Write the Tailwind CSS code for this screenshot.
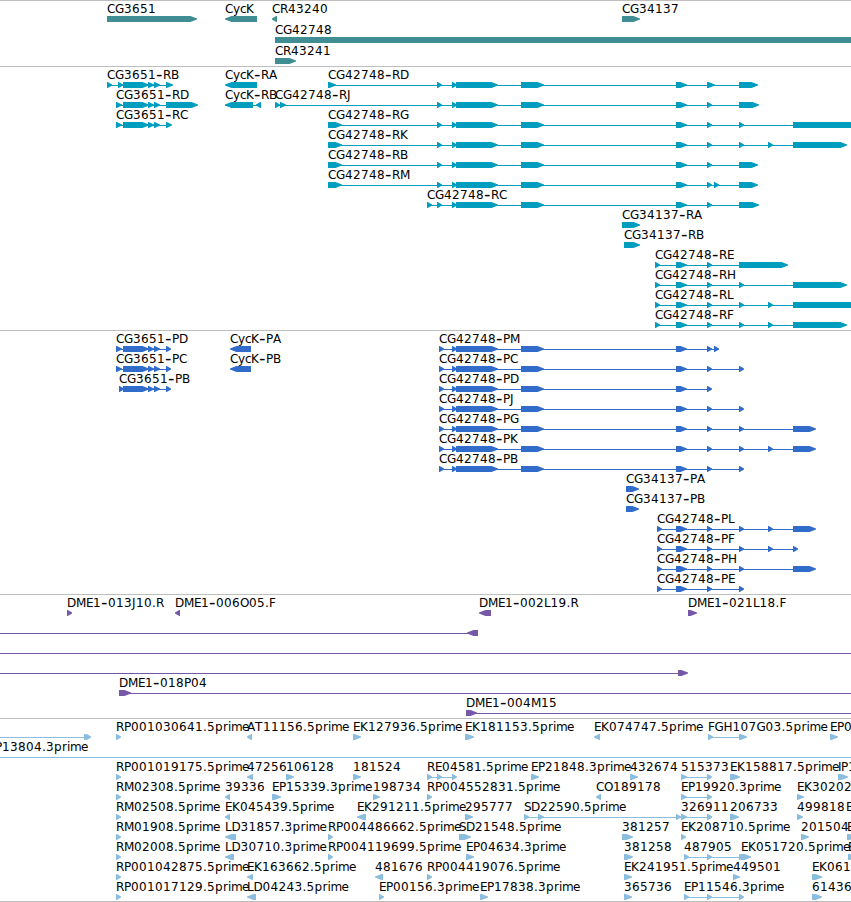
<!DOCTYPE html>
<html lang="en">
<head>
<meta charset="utf-8">
<title>Genome tracks</title>
<script src="https://cdn.jsdelivr.net/npm/@tailwindcss/browser@4"></script>
</head>
<body class="bg-white overflow-hidden">
<main class="flex flex-col w-[851px] h-[902px] overflow-hidden border-b border-[#bebebe] font-['DejaVu_Sans',sans-serif] text-[12px]">
  <section class="h-[66px] shrink-0 border-t border-[#bebebe]"><svg id="genes" class="block w-full h-[65px] overflow-visible text-[#408e93]"></svg></section>
  <section class="h-[264px] shrink-0 border-t border-[#bebebe]"><svg id="transcripts" class="block w-full h-[263px] overflow-visible text-[#009dbf]"></svg></section>
  <section class="h-[264px] shrink-0 border-t border-[#bebebe]"><svg id="proteins" class="block w-full h-[263px] overflow-visible text-[#326ccb]"></svg></section>
  <section class="h-[124px] shrink-0 border-t border-[#bebebe]"><svg id="bacs" class="block w-full h-[123px] overflow-visible text-[#7558a8]"></svg></section>
  <section class="h-[183px] shrink-0 border-t border-[#bebebe]"><svg id="ests" class="block w-full h-[182px] overflow-visible text-[#8abdde]"></svg></section>
</main>
<script>
// Horizontal advance of each label character, in pixels
const ADV = {C:8,G:9,R:8,D:9,K:8,B:7,J:4,M:10,E:7,H:9,L:6.5,F:6.5,P:7,A:8,O:9,S:7,T:8,I:3,'-':7,'.':4,y:7,c:6,p:8,r:5,i:3,m:11,e:7};
const NS = 'http://www.w3.org/2000/svg';
function el(parent, name, attrs) {
  const n = document.createElementNS(NS, name);
  for (const k in attrs) n.setAttribute(k, attrs[k]);
  parent.appendChild(n);
  return n;
}
// Feature: [row, label, exons "a-b a-b", direction, connector start, connector end]
function track(id, pitch, items) {
  const svg = document.getElementById(id);
  for (const [row, label, spans, dir = 1, from, to] of items) {
    const y = 15 + row * pitch;
    const ex = spans ? spans.split(' ').map(s => s.split('-').map(Number)) : [];
    const a = from ?? (ex.length ? ex[0][0] : 0), b = to ?? (ex.length ? ex[ex.length - 1][1] - 2 : 0);
    if (ex.length !== 1 || from != null || to != null)
      el(svg, 'rect', {x: a, y: y + 3, width: b - a, height: 1, fill: 'currentColor'});
    for (const [s, e] of ex) {
      const h = Math.min(e - s - 0.7, 6.5);
      const pts = dir > 0
        ? [[s, y], [e - h, y], [e, y + 2.5], [e, y + 3.5], [e - h, y + 6], [s, y + 6]]
        : [[e, y], [s + h, y], [s, y + 2.5], [s, y + 3.5], [s + h, y + 6], [e, y + 6]];
      el(svg, 'polygon', {points: pts.map(p => p.join()).join(' '), fill: 'currentColor'});
    }
  }
  for (const [row, label, spans] of items) {
    if (label) drawLabel(svg, label, parseFloat(spans), 12 + row * pitch);
  }
}
function drawLabel(svg, label, x, y) {
  const text = el(svg, 'text', {fill: '#000'});
  for (const part of label.split(/(-)/)) {
    if (!part) continue;
    const dash = part === '-';
    const xs = [];
    for (const ch of part) { xs.push(x); x += ADV[ch] ?? 8; }
    el(text, 'tspan', {x: xs.join(' '), y: dash ? y + 1 : y, class: dash ? 'text-[18px]' : 'text-[12px]'}).textContent = part;
  }
}
track('genes', 21, [
  [0,'CG3651','107-197'],[0,'CycK','225-257',-1],[0,'CR43240','272-277',-1],[0,'CG34137','622-640'],
  [1,'CG42748','275-870'],[2,'CR43241','275-296']
]);
const M = '437-442 452-457 456-498 521-544 676-687 ';
track('transcripts', 20, [
  [0,'CG3651-RB','107-112 118-123 123-149 148-154 154-160 166-173'],
  [1,'CG3651-RD','116-122 123-149 148-154 154-160 166-198'],
  [2,'CG3651-RC','116-122 123-149 148-154 154-160 166-172'],
  [0,'CycK-RA','225-257',-1],[1,'CycK-RB','225-253 256-261',-1],
  [0,'CG42748-RD','328-336 '+M+'707-715 739-758'],
  [1,'CG42748-RJ','275-280 280-286 '+M+'707-712 739-759'],
  [2,'CG42748-RG','328-342 '+M+'707-712 739-744 793-870'],
  [3,'CG42748-RK','328-342 '+M+'707-712 739-744 768-773 793-847'],
  [4,'CG42748-RB','328-342 '+M+'707-712 739-758'],
  [5,'CG42748-RM','328-342 '+M+'707-712 714-719 739-758'],
  [6,'CG42748-RC','427-432 '+M+'707-712 739-759'],
  [7,'CG34137-RA','622-640'],[8,'CG34137-RB','624-640'],
  [9,'CG42748-RE','655-660 676-687 707-712 739-788'],
  [10,'CG42748-RH','655-660 676-687 707-712 739-744 793-847'],
  [11,'CG42748-RL','655-660 676-687 707-712 739-744 768-773 793-870'],
  [12,'CG42748-RF','655-660 676-687 707-712 739-744 768-773 793-847']
]);
const P = '439-444 452-457 456-498 521-544 676-687 ';
track('proteins', 20, [
  [0,'CG3651-PD','116-122 123-149 148-154 154-160 166-171'],
  [1,'CG3651-PC','116-122 123-149 148-154 154-160 166-171'],
  [2,'CG3651-PB','119-124 123-149 148-154 154-160 166-171'],
  [0,'CycK-PA','230-251',-1],[1,'CycK-PB','230-251',-1],
  [0,'CG42748-PM',P+'707-712 714-719'],
  [1,'CG42748-PC',P+'707-712 739-744'],
  [2,'CG42748-PD',P+'707-712'],
  [3,'CG42748-PJ',P+'707-712 739-744'],
  [4,'CG42748-PG',P+'707-712 739-744 793-816'],
  [5,'CG42748-PK',P+'707-712 739-744 768-773 793-816'],
  [6,'CG42748-PB',P+'707-712 739-744'],
  [7,'CG34137-PA','626-639'],[8,'CG34137-PB','626-639'],
  [9,'CG42748-PL','657-662 676-687 707-712 739-744 768-773 793-816'],
  [10,'CG42748-PF','657-662 676-687 707-712 739-744 768-773 793-798'],
  [11,'CG42748-PH','657-662 676-687 707-712 739-744 793-816'],
  [12,'CG42748-PE','657-662 676-687 707-712 739-744']
]);
track('bacs', 20, [
  [0,'DME1-013J10.R','67-72'],[0,'DME1-006O05.F','175-180',-1],[0,'DME1-002L19.R','479-491',-1],[0,'DME1-021L18.F','688-697'],
  [1,'','467-478',-1,0,470],[2,'','',1,0,851],[3,'','678-688',1,0,680],
  [4,'DME1-018P04','119-131',1,125,851],[5,'DME1-004M15','466-477',1,470,851]
]);
track('ests', 20, [
  [0,'','84-89 86-91',1,0,88],[0,'RP001030641.5prime','116-121'],[0,'AT11156.5prime','247-252',-1],
  [0,'EK127936.5prime','353-361'],[0,'EK181153.5prime','465-474'],[0,'EK074747.5prime','594-600',-1],
  [0,'FGH107G03.5prime','708-713 739-747'],[0,'EP0','830-838'],
  [1,'','',1,0,851],
  [2,'RP001019175.5prime','116-121'],[2,'47256','247-253',-1],[2,'106128','286-294'],[2,'181524','353-361'],
  [2,'RE04581.5prime','427-432 437-442 452-457'],[2,'EP21848.3prime','531-539'],[2,'432674','630-638'],
  [2,'515373','681-687 707-712'],[2,'EK158817.5prime','730-740'],[2,'IP1','838-848'],
  [3,'RM02308.5prime','116-121'],[3,'39336','225-230',-1],[3,'EP15339.3prime','272-281'],[3,'198734','373-380'],
  [3,'RP004552831.5prime','427-432'],[3,'CO189178','596-601',-1],[3,'EP19920.3prime','681-687 707-712'],[3,'EK30202','797-804'],
  [4,'RM02508.5prime','116-121'],[4,'EK045439.5prime','225-230',-1],[4,'EK291211.5prime','357-366',-1],[4,'295777','465-473'],
  [4,'SD22590.5prime','524-529 538-544 676-681 681-686 707-712'],[4,'326911','681-687 707-712'],
  [4,'206733','730-739'],[4,'499818','797-803'],
  [5,'RM01908.5prime','116-121'],[5,'LD31857.3prime','225-236',-1],[5,'RP004486662.5prime','328-333'],[5,'SD21548.5prime','459-471'],
  [5,'381257','622-633'],[5,'EK208710.5prime','681-686'],[5,'201504','801-809'],[5,'E','847-856'],
  [6,'RM02008.5prime','116-121'],[6,'LD30710.3prime','225-234',-1],[6,'RP004119699.5prime','328-333'],[6,'EP04634.3prime','466-474'],
  [6,'381258','624-633'],[6,'487905','684-689 707-712 739-745'],[6,'EK051720.5prime','741-751'],[6,'E','848-856'],
  [7,'RP001042875.5prime','116-121'],[7,'EK163662.5prime','247-253',-1],[7,'481676','375-383',-1],[7,'RP004419076.5prime','427-432'],
  [7,'EK241951.5prime','624-632'],[7,'449501','733-740'],[7,'EK061','812-822'],
  [8,'RP001017129.5prime','116-121'],[8,'LD04243.5prime','247-256',-1],[8,'EP00156.3prime','379-384'],[8,'EP17838.3prime','480-488'],
  [8,'365736','624-632'],[8,'EP11546.3prime','684-689 707-712 739-744'],[8,'61436','812-822']
]);
drawLabel(document.getElementById('ests'), 'EP13804.3prime', -12, 32);
drawLabel(document.getElementById('ests'), 'E', 846, 92);
</script>
</body>
</html>
